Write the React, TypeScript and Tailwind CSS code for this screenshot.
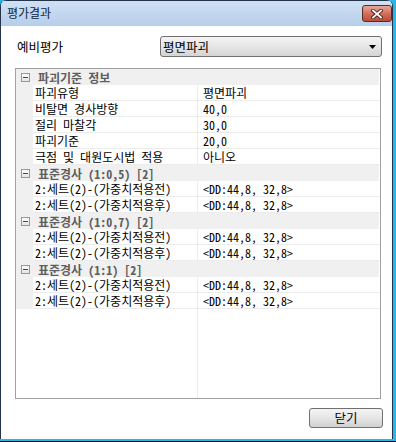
import React from "react";

type Section = { title: string; rows: [string, string][] };

const sections: Section[] = [
  {
    title: "파괴기준 정보",
    rows: [
      ["파괴유형", "평면파괴"],
      ["비탈면 경사방향", "40,0"],
      ["절리 마찰각", "30,0"],
      ["파괴기준", "20,0"],
      ["극점 및 대원도시법 적용", "아니오"],
    ],
  },
  {
    title: "표준경사 (1:0,5) [2]",
    rows: [
      ["2:세트(2)-(가중치적용전)", "<DD:44,8, 32,8>"],
      ["2:세트(2)-(가중치적용후)", "<DD:44,8, 32,8>"],
    ],
  },
  {
    title: "표준경사 (1:0,7) [2]",
    rows: [
      ["2:세트(2)-(가중치적용전)", "<DD:44,8, 32,8>"],
      ["2:세트(2)-(가중치적용후)", "<DD:44,8, 32,8>"],
    ],
  },
  {
    title: "표준경사 (1:1) [2]",
    rows: [
      ["2:세트(2)-(가중치적용전)", "<DD:44,8, 32,8>"],
      ["2:세트(2)-(가중치적용후)", "<DD:44,8, 32,8>"],
    ],
  },
];

function Expander() {
  return (
    <div className="w-[9px] h-[9px] border border-[#8a9bb0] bg-gradient-to-b from-white to-[#dfe4ea] flex items-center justify-center">
      <div className="w-[5px] h-[1px] bg-[#2c4a7a]" />
    </div>
  );
}

function CloseButton() {
  return (
    <div className="w-[30px] h-[17px] rounded-[3px] border border-[#5b2a22] bg-gradient-to-b from-[#e9a999] via-[#d1705e] to-[#c04a38] flex items-center justify-center">
      <svg width="12" height="10" viewBox="0 0 12 10">
        <path d="M2 1.5 L10 8.5 M10 1.5 L2 8.5" stroke="#4a1e18" strokeWidth="3.6" strokeLinecap="square" />
        <path d="M2 1.5 L10 8.5 M10 1.5 L2 8.5" stroke="#ffffff" strokeWidth="1.8" strokeLinecap="square" />
      </svg>
    </div>
  );
}

export default function App() {
  return (
    <div className="w-[396px] h-[442px] bg-black pb-[1px] font-['Noto_Sans_CJK_KR',sans-serif] [font-feature-settings:'hwid'] text-black">
      <div className="h-full bg-[#2cb6e8] pr-[3px] pb-[2px]">
        <div className="h-full flex flex-col bg-white border-l border-r border-[#24344a] rounded-t-[6px] overflow-hidden">

          {/* TITLE BAR */}
          <div className="h-[26px] border-t border-[#24344a] bg-gradient-to-b from-[#d0e1f4] to-[#b6cee9] flex items-start justify-between">
            <span className="pl-[6px] pt-[4px] text-[12px] leading-[16px] text-[#10243c]">평가결과</span>
            <div className="pt-[4px]">
              <CloseButton />
            </div>
          </div>

          {/* BODY */}
          <div className="flex-1 flex flex-col">
            <div className="mt-[10px] flex items-center">
              <span className="ml-[16px] w-[143px] text-[12.5px] leading-[16px]">예비평가</span>
              <div className="w-[222px] h-[21px] rounded-[3px] border border-[#707070] bg-gradient-to-b from-[#f4f4f4] via-[#e6e6e6] to-[#d4d4d4] flex items-center justify-between pl-[2px] pr-[5px]">
                <span className="text-[12.5px] leading-[16px]">평면파괴</span>
                <svg width="7" height="4" viewBox="0 0 7 4">
                  <path d="M0 0 H7 L3.5 4 Z" fill="#000" />
                </svg>
              </div>
            </div>

            {/* PROPERTY GRID */}
            <div className="mt-[11px] ml-[14px] w-[366px] h-[331px] border border-[#a0a0a0] flex flex-col text-[12px] leading-[15px]">
              {sections.map((s) => (
                <React.Fragment key={s.title}>
                  <div className="h-[16px] flex items-center bg-[#f0f0f0] mr-[1px]">
                    <div className="w-[17px] flex justify-center pl-[1px]">
                      <Expander />
                    </div>
                    <span className="pl-[5px] font-bold text-[#5e5e5e] whitespace-nowrap">{s.title}</span>
                  </div>
                  {s.rows.map(([name, value], i) => (
                    <div key={s.title + i} className="h-[16px] flex">
                      <div className="w-[17px] bg-[#f0f0f0]" />
                      <div className="w-[164px] pl-[2px] border-b border-[#ececec] whitespace-nowrap">{name}</div>
                      <div className="w-[183px] pl-[5px] border-l border-b border-[#ececec] whitespace-nowrap">{value}</div>
                    </div>
                  ))}
                </React.Fragment>
              ))}
              <div className="flex-1 flex">
                <div className="w-[181px]" />
                <div className="border-l border-[#ececec]" />
              </div>
            </div>

            {/* FOOTER */}
            <div className="mt-[9px] flex justify-end pr-[9px]">
              <div className="w-[74px] h-[20px] rounded-[3px] border border-[#707070] bg-gradient-to-b from-[#f4f4f4] via-[#e6e6e6] to-[#d0d0d0] flex items-center justify-center text-[12.5px] leading-[16px]">
                닫기
              </div>
            </div>
          </div>
        </div>
      </div>
    </div>
  );
}
